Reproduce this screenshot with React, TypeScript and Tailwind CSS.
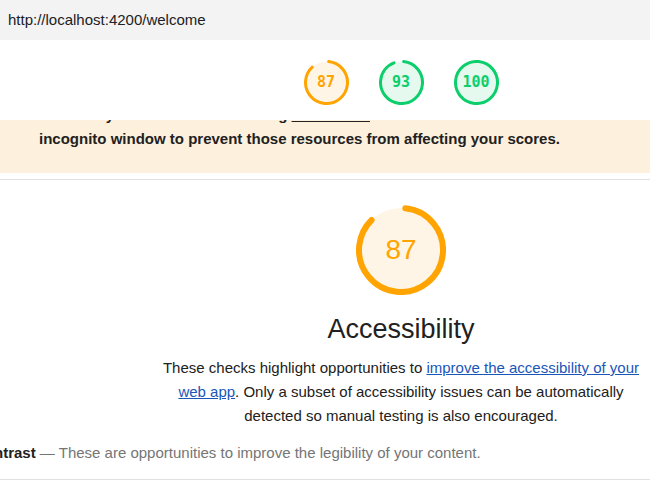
import React from "react";

type GaugeProps = {
  score: number;
  size: number;
  color: string;
  fill: string;
  labelClass: string;
};

function Gauge({ score, size, color, fill, labelClass }: GaugeProps) {
  const r = 56;
  const circ = 2 * Math.PI * r;
  const dash = score >= 100 ? circ : circ * (score / 100) - 4;
  return (
    <div className="relative shrink-0" style={{ width: size, height: size }}>
      <svg viewBox="0 0 120 120" className="absolute inset-0 h-full w-full">
        <circle cx="60" cy="60" r={r} fill={fill} stroke="none" />
        <circle
          cx="60"
          cy="60"
          r={r}
          fill="none"
          stroke={color}
          strokeWidth="8"
          strokeLinecap="round"
          strokeDasharray={`${dash} ${circ}`}
          transform="rotate(-84 60 60)"
        />
      </svg>
      <div className={`absolute inset-0 flex items-center justify-center ${labelClass}`}>{score}</div>
    </div>
  );
}

export default function App() {
  return (
    <div className="h-[493px] w-[650px] overflow-hidden bg-white font-['Liberation_Sans',Arial,sans-serif] text-[#212121]">
      <div className="flex h-10 items-center bg-[#f3f3f3] px-2 text-[15px] text-[#202124]">
        http://localhost:4200/welcome
      </div>

      <div className="w-[802px]">
        <div className="flex h-[80px] items-start justify-center gap-[30px] pt-[20px]">
          <Gauge
            score={87}
            size={45}
            color="#ffa400"
            fill="#fff5e6"
            labelClass="font-['DejaVu_Sans_Mono',monospace] text-[15px] font-bold text-[#ffa400]"
          />
          <Gauge
            score={93}
            size={45}
            color="#0cce6b"
            fill="#e6f9ee"
            labelClass="font-['DejaVu_Sans_Mono',monospace] text-[15px] font-bold text-[#0cce6b]"
          />
          <Gauge
            score={100}
            size={45}
            color="#0cce6b"
            fill="#e6f9ee"
            labelClass="font-['DejaVu_Sans_Mono',monospace] text-[15px] font-bold text-[#0cce6b]"
          />
        </div>
      </div>

      <div className="h-[53px] overflow-hidden bg-[#fdf0dd] pl-[39px] text-[15px] font-bold leading-[24px] text-[#212121]">
        <p className="-mt-[17px] whitespace-nowrap">
          There may be stored data affecting <span className="underline">IndexedDB</span>.
        </p>
        <p className="whitespace-nowrap">
          incognito window to prevent those resources from affecting your scores.
        </p>
      </div>

      <div className="h-[6px]" />
      <div className="h-px bg-[#e0e0e0]" />

      <div className="w-[802px]">
        <div className="flex flex-col items-center pt-[25px]">
          <Gauge
            score={87}
            size={90}
            color="#ffa400"
            fill="#fff5e6"
            labelClass="text-[28px] text-[#ffa400]"
          />
          <h2 className="mt-[18px] text-[27px] leading-[32px] text-[#212121]">Accessibility</h2>
          <p className="mt-[11px] w-[482px] text-center text-[15px] leading-[24px] text-[#212121]">
            These checks highlight opportunities to{" "}
            <a className="text-[#1a56b8] underline">improve the accessibility of your web app</a>. Only a
            subset of accessibility issues can be automatically detected so manual testing is also
            encouraged.
          </p>
        </div>
        <div className="-ml-[26px] mt-[15px] whitespace-nowrap text-[15px] leading-[20px]">
          <span className="font-bold text-[#212121]">Contrast</span>
          <span className="text-[#757575]"> — These are opportunities to improve the legibility of your content.</span>
        </div>
      </div>
      <div className="mt-[16px] h-px bg-[#e0e0e0]" />
    </div>
  );
}
